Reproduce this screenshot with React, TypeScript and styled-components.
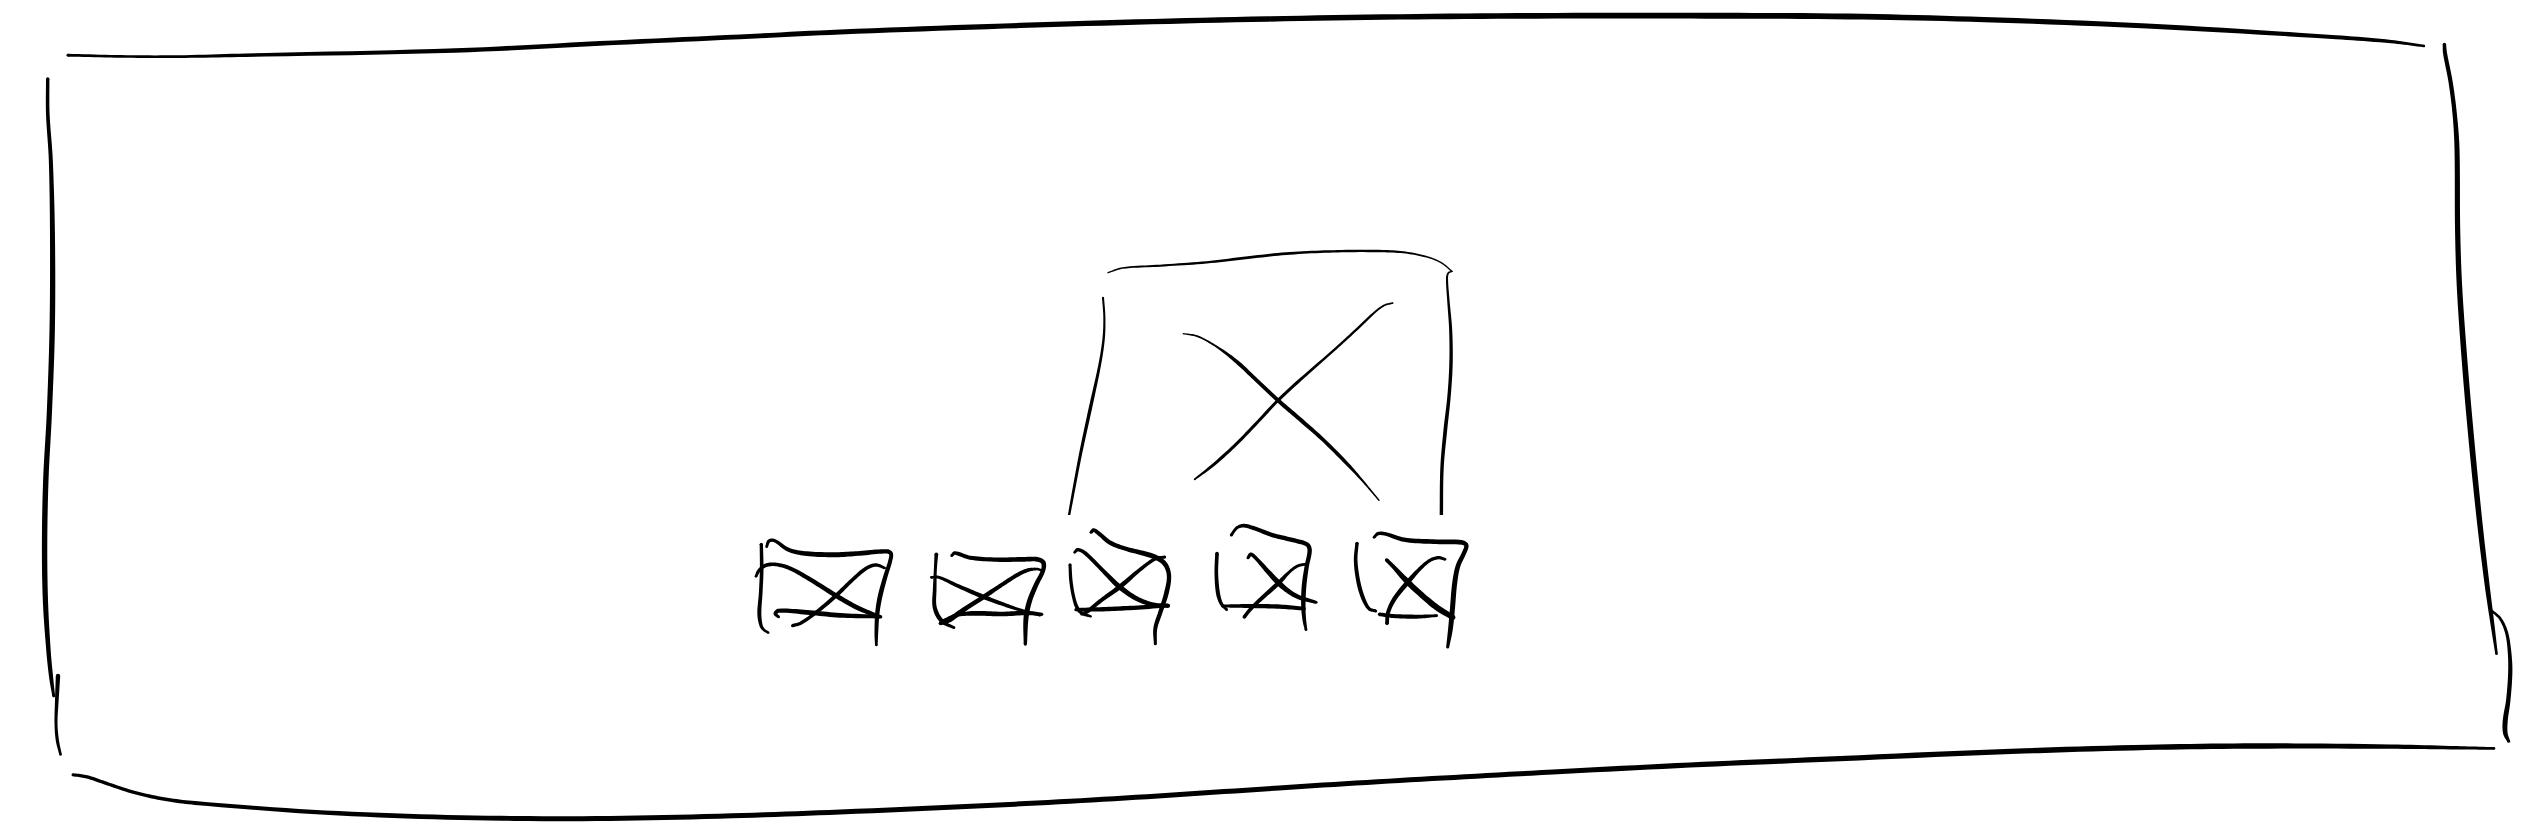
import React from "react";
import styled, { createGlobalStyle } from "styled-components";

/* A pen stroke is a list of [x, y, pen width] samples. */
type Sample = [number, number, number];

interface Sketch {
  label: string;
  viewBox: string;
  width: number;
  strokes: Sample[][];
}

const GlobalStyle = createGlobalStyle`
  *, *::before, *::after { box-sizing: border-box; }
  body { margin: 0; background: #fff; color: #000; font-family: "Liberation Sans", sans-serif; }
`;

const Hero = styled.main`
  position: relative;
  display: flex;
  justify-content: center;
  min-height: 100vh;
  padding: 240px 312px 160px 0;
  overflow: hidden;
`;

const FrameDrawing = styled.svg`
  position: absolute;
  inset: 0;
  width: 100%;
  height: 100%;
  pointer-events: none;
`;

const Gallery = styled.section`
  display: flex;
  flex-direction: column;
  align-items: flex-end;
  gap: 4px;
`;

const MainImage = styled.svg`
  display: block;
  width: 412px;
  height: 275px;
`;

const Thumbnails = styled.ul`
  display: flex;
  gap: 16px;
  margin: 0;
  padding: 0;
  list-style: none;
`;

const Thumbnail = styled.svg<{ $width: number }>`
  display: block;
  width: ${({ $width }) => $width}px;
  height: 132px;
`;

/* Smooth the samples with a Catmull-Rom spline, pen width included. */
function smooth(samples: Sample[]): Sample[] {
  const steps = 10;
  const result: Sample[] = [];
  for (let i = 0; i < samples.length - 1; i++) {
    const a = samples[Math.max(i - 1, 0)];
    const b = samples[i];
    const c = samples[i + 1];
    const d = samples[Math.min(i + 2, samples.length - 1)];
    const span = (p: Sample, q: Sample) =>
      Math.max(Math.hypot(q[0] - p[0], q[1] - p[1]), 0.001);
    const ab = span(a, b);
    const bc = span(b, c);
    const cd = span(c, d);
    for (let s = 0; s < steps; s++) {
      const t = s / steps;
      const at = (k: number) => {
        const slopeB = a === b ? c[k] - b[k] : ((c[k] - a[k]) / (ab + bc)) * bc;
        const slopeC = c === d ? c[k] - b[k] : ((d[k] - b[k]) / (bc + cd)) * bc;
        const t2 = t * t;
        const t3 = t2 * t;
        return (
          (2 * t3 - 3 * t2 + 1) * b[k] +
          (t3 - 2 * t2 + t) * slopeB +
          (3 * t2 - 2 * t3) * c[k] +
          (t3 - t2) * slopeC
        );
      };
      result.push([at(0), at(1), at(2)]);
    }
  }
  result.push(samples[samples.length - 1]);
  return result;
}

/* Outline of a stroke whose thickness follows the pen width. */
function outline(samples: Sample[], bleed: number): string {
  const line = smooth(samples);
  const left: string[] = [];
  const right: string[] = [];
  line.forEach(([x, y, w], i) => {
    const p = line[Math.max(i - 1, 0)];
    const n = line[Math.min(i + 1, line.length - 1)];
    const length = Math.hypot(n[0] - p[0], n[1] - p[1]) || 1;
    const half = (w + bleed) / 2;
    const nx = (-(n[1] - p[1]) / length) * half;
    const ny = ((n[0] - p[0]) / length) * half;
    left.push(`${(x + nx).toFixed(2)} ${(y + ny).toFixed(2)}`);
    right.unshift(`${(x - nx).toFixed(2)} ${(y - ny).toFixed(2)}`);
  });
  return `M${left.concat(right).join("L")}Z`;
}

function PenStroke({ samples, bleed }: { samples: Sample[]; bleed: number }) {
  const first = samples[0];
  const last = samples[samples.length - 1];
  return (
    <g>
      <path d={outline(samples, bleed)} />
      <circle cx={first[0]} cy={first[1]} r={(first[2] + bleed) / 2} />
      <circle cx={last[0]} cy={last[1]} r={(last[2] + bleed) / 2} />
    </g>
  );
}

const frame: Sample[][] = [
  [
    [68, 55.2, 2.5], [121, 56.4, 2.2], [178, 56.6, 2.3], [245, 55.2, 3], [455, 50.5, 4],
    [600, 43.4, 4.2], [740, 36.8, 4.4], [840, 32, 4.6], [1004, 26, 4.8], [1169, 21.2, 5],
    [1334, 17.8, 5], [1498, 16, 5.2], [1690, 15.7, 5.4], [1849, 16.5, 5.4], [1984, 19.6, 4.8],
    [2147, 26, 4.6], [2336, 37.2, 3.6], [2391, 41.6, 3], [2424, 46, 2],
  ],
  [
    [47.7, 79, 3], [47.8, 114, 3.2], [50.8, 160, 3.6], [52.5, 239, 4.6], [52.2, 329, 5],
    [49.3, 414, 4.8], [45.9, 478, 5], [44.6, 541, 5], [45.4, 600, 4.8], [48.6, 652, 4],
    [51.2, 678, 3.6], [53.7, 696, 2.4],
  ],
  [[58, 676, 4], [56.7, 703, 3.2], [56, 723, 2.6], [57.3, 740, 2.8], [60.5, 754.5, 2.2]],
  [
    [73, 774.7, 2.6], [87, 776.9, 3], [107, 783.6, 3], [134, 792.4, 3], [164, 799, 3.2],
    [195, 803, 3.4], [325, 812.6, 4], [461, 817.6, 4.4], [596, 818.6, 4.6], [732, 815.8, 4.6],
    [840, 812, 4.6], [1004, 804.7, 4.6], [1114, 798.7, 4.6], [1224, 791.6, 4.6],
    [1334, 784.4, 4.6], [1443, 778, 4.6], [1553, 772, 4.6], [1690, 765, 4.8],
    [1821, 759.4, 4.8], [2011, 751.4, 5], [2147, 747.4, 5], [2255, 746, 5], [2391, 746.6, 4],
    [2457, 747.8, 3], [2494, 748.4, 2.2],
  ],
  [
    [2444.4, 44.5, 3], [2445, 53, 3.6], [2450.6, 82, 3.8], [2454.8, 115, 4], [2457, 149, 4.6],
    [2457.6, 228, 4.8], [2459.5, 287, 5], [2465, 366, 5.3], [2472, 446, 5.3],
    [2480, 525, 5], [2487, 584, 4.5], [2492, 621, 3.6], [2496.5, 653.7, 2.2],
  ],
  [
    [2492, 611, 2], [2500, 618.3, 2.4], [2506, 630.7, 2.7], [2509, 646.7, 3], [2510.3, 670, 3.8],
    [2508.3, 700, 4], [2505.3, 720, 4.6], [2505.3, 733, 4.2], [2508.6, 741.3, 2.6],
  ],
];

const mainImage: Sample[][] = [
  [
    [174, 128, 3], [218, 114, 4], [330, 107, 5], [470, 97, 6], [600, 82, 7], [720, 70, 7],
    [850, 64, 6], [980, 63, 6], [1060, 67, 5], [1125, 79, 4], [1172, 97, 3], [1206, 124, 3],
  ],
  [
    [1206, 124, 3], [1195, 129, 4], [1191, 145, 5], [1195, 210, 6], [1202, 300, 8],
    [1203, 400, 9], [1197, 500, 9], [1186, 600, 10], [1176, 715, 9], [1174, 862, 9],
  ],
  [
    [159, 203, 5], [163, 260, 5], [161, 325, 6], [149, 405, 7], [121, 535, 9],
    [93, 665, 8], [71, 780, 7], [56, 862, 6],
  ],
  [
    [400, 311, 3], [443, 319, 4], [500, 350, 5], [560, 395, 10], [620, 451, 10], [684, 511, 11],
    [750, 568, 11], [820, 630, 10], [890, 700, 9], [940, 755, 5], [987, 811, 3],
  ],
  [
    [434, 748, 4], [492, 703, 8], [560, 641, 8], [620, 579, 8], [684, 511, 8], [740, 459, 8],
    [850, 362, 6], [920, 298, 6], [975, 246, 5], [1003, 226, 4], [1028, 219, 4],
  ],
];

const thumbnails: Sketch[] = [
  {
    label: "Image 1",
    viewBox: "36 27 432 396",
    width: 144,
    strokes: [
      [[64, 103, 8], [65, 180, 9], [62, 250, 9], [58, 310, 10], [63, 346, 8], [72, 360, 6], [85, 368, 5]],
      [
        [80, 110, 6], [87, 93, 8], [104, 92, 8], [145, 119, 10], [200, 131, 12], [290, 134, 13],
        [360, 130, 12], [440, 124, 11], [453, 131, 10], [450, 155, 10], [436, 200, 11],
        [420, 260, 12], [412, 310, 11], [409, 370, 9], [409, 405, 6],
      ],
      [
        [48, 199, 6], [56, 183, 8], [75, 167, 9], [105, 163, 9], [150, 175, 10],
        [210, 208, 11], [290, 258, 12], [350, 292, 12], [400, 313, 10], [423, 321, 6],
      ],
      [
        [158, 347, 8], [183, 339, 8], [230, 306, 9], [290, 255, 10], [340, 207, 9],
        [380, 174, 9], [409, 165, 8], [434, 174, 6],
      ],
      [[116, 321, 6], [106, 311, 9], [116, 302, 10], [200, 307, 12], [300, 316, 12], [420, 320, 9]],
    ],
  },
  {
    label: "Image 2",
    viewBox: "516 27 414 396",
    width: 138,
    strokes: [
      [
        [589, 133, 9], [586, 180, 7], [584, 240, 9], [583, 285, 10], [592, 314, 11],
        [610, 337, 10], [642, 353, 6],
      ],
      [
        [635, 137, 6], [645, 129, 9], [690, 143, 10], [770, 149, 11], [850, 148, 12],
        [892, 148, 12], [910, 158, 12], [909, 182, 11], [888, 225, 12], [868, 275, 13],
        [858, 325, 13], [856, 402, 8],
      ],
      [[574, 202, 6], [597, 202, 7], [650, 226, 9], [729, 260, 11], [790, 283, 9], [838, 299, 7], [900, 316, 5]],
      [
        [602, 340, 10], [630, 328, 14], [670, 300, 12], [729, 262, 12], [780, 228, 10],
        [830, 196, 10], [862, 181, 9], [890, 177, 6], [905, 181, 5],
      ],
      [[605, 336, 10], [645, 317, 8], [700, 310, 12], [785, 312, 12], [860, 309, 11], [905, 313, 8]],
    ],
  },
  {
    label: "Image 3",
    viewBox: "78 27 354 396",
    width: 118,
    strokes: [
      [
        [90, 164, 7], [93, 215, 8], [102, 266, 8], [113, 296, 9], [128, 311, 8], [152, 319, 5],
      ],
      [
        [153, 67, 7], [161, 60, 9], [177, 71, 10], [212, 99, 11], [260, 117, 11], [340, 139, 13],
        [374, 161, 12], [387, 197, 11], [379, 250, 12], [360, 310, 11], [346, 355, 10], [346, 401, 7],
      ],
      [
        [104, 127, 6], [113, 119, 8], [135, 129, 9], [185, 178, 10], [239, 231, 13],
        [290, 266, 12], [340, 284, 11], [384, 287, 10],
      ],
      [[125, 312, 7], [140, 306, 9], [185, 270, 10], [239, 231, 12], [300, 179, 9], [345, 147, 8], [374, 141, 7]],
      [[108, 299, 8], [180, 298, 11], [270, 294, 11], [384, 287, 9]],
    ],
  },
  {
    label: "Image 4",
    viewBox: "0 27 360 396",
    width: 120,
    strokes: [
      [[51, 131, 9], [49, 190, 9], [54, 250, 10], [64, 281, 8], [80, 299, 6]],
      [
        [94, 75, 7], [110, 54, 7], [130, 47, 9], [160, 54, 10], [220, 76, 11], [290, 93, 11],
        [322, 104, 11], [329, 122, 11], [320, 170, 11], [312, 230, 12], [310, 290, 11],
        [313, 330, 9], [318, 359, 6],
      ],
      [
        [144, 143, 7], [153, 133, 9], [170, 147, 9], [205, 186, 12], [236, 219, 14],
        [270, 247, 12], [300, 263, 11], [348, 277, 7],
      ],
      [
        [133, 321, 9], [150, 299, 9], [187, 263, 10], [236, 219, 11], [268, 186, 7],
        [293, 168, 7], [320, 162, 6],
      ],
      [[68, 288, 7], [150, 288, 10], [240, 290, 11], [312, 296, 9]],
    ],
  },
  {
    label: "Image 5",
    viewBox: "408 27 408 396",
    width: 136,
    strokes: [
      [[471, 100, 8], [467, 150, 9], [474, 210, 10], [488, 261, 10], [507, 296, 8], [527, 303, 7]],
      [
        [522, 82, 6], [534, 71, 8], [557, 72, 9], [612, 89, 11], [700, 95, 12], [785, 97, 12],
        [799, 106, 11], [793, 127, 11], [774, 168, 12], [764, 220, 13], [757, 300, 13],
        [751, 360, 12], [743, 411, 7],
      ],
      [[560, 150, 9], [580, 170, 10], [623, 216, 15], [665, 255, 15], [710, 292, 16], [758, 322, 14]],
      [
        [561, 340, 9], [564, 308, 10], [583, 267, 11], [623, 217, 12], [660, 176, 9],
        [690, 151, 8], [715, 143, 8], [735, 148, 6],
      ],
      [[539, 313, 9], [580, 318, 10], [650, 320, 10], [710, 317, 6]],
    ],
  },
];

/* bleed is the extra ink that spreads round a stroke, in viewBox units. */
function Strokes({ items, bleed }: { items: Sample[][]; bleed: number }) {
  return (
    <>
      {items.map((samples, i) => (
        <PenStroke key={i} samples={samples} bleed={bleed} />
      ))}
    </>
  );
}

export default function App() {
  return (
    <>
      <GlobalStyle />
      <Hero>
        <FrameDrawing viewBox="0 0 2536 832" preserveAspectRatio="none" aria-hidden="true">
          <Strokes items={frame} bleed={0.4} />
        </FrameDrawing>
        <Gallery aria-label="Gallery">
          <MainImage viewBox="30 30 1236 825" role="img" aria-label="Main image">
            <Strokes items={mainImage} bleed={1.2} />
          </MainImage>
          <Thumbnails>
            {thumbnails.map(({ label, viewBox, width, strokes }) => (
              <li key={label}>
                <Thumbnail $width={width} viewBox={viewBox} role="img" aria-label={label}>
                  <Strokes items={strokes} bleed={2} />
                </Thumbnail>
              </li>
            ))}
          </Thumbnails>
        </Gallery>
      </Hero>
    </>
  );
}
